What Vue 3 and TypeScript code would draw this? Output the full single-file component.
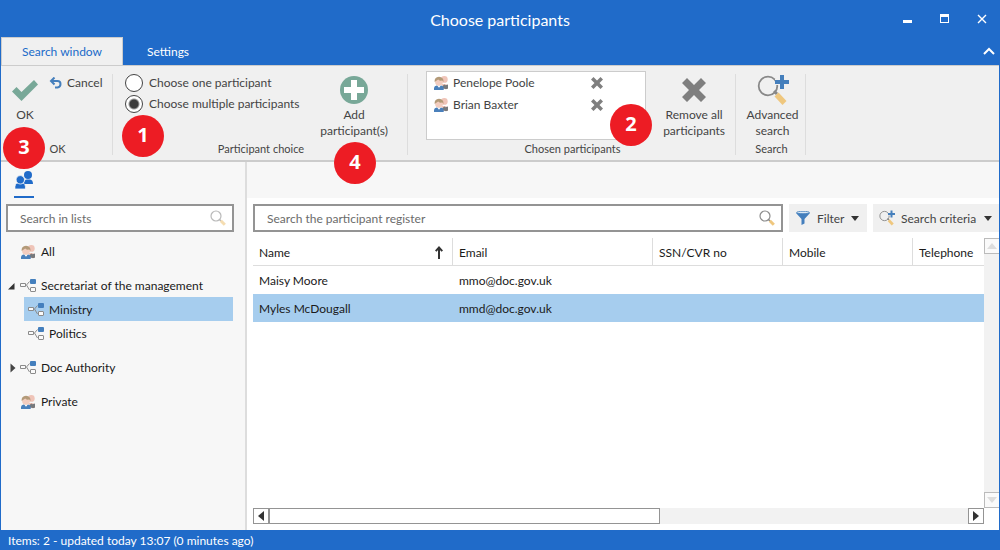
<script setup lang="ts">
import { ref } from 'vue'

interface Person { name: string; email: string }
interface TreeNode { label: string; icon: 'people' | 'org'; level: number; state?: 'open' | 'closed'; gap: boolean }

const mode = ref<'one' | 'multiple'>('multiple')
const listQuery = ref('')
const registerQuery = ref('')
const chosen = ref<string[]>(['Penelope Poole', 'Brian Baxter'])
const selectedNode = ref('Ministry')
const selectedPerson = ref('Myles McDougall')

const tree: TreeNode[] = [
  { label: 'All', icon: 'people', level: 0, gap: false },
  { label: 'Secretariat of the management', icon: 'org', level: 0, state: 'open', gap: true },
  { label: 'Ministry', icon: 'org', level: 1, gap: false },
  { label: 'Politics', icon: 'org', level: 1, gap: false },
  { label: 'Doc Authority', icon: 'org', level: 0, state: 'closed', gap: true },
  { label: 'Private', icon: 'people', level: 0, gap: true },
]

const people: Person[] = [
  { name: 'Maisy Moore', email: 'mmo@doc.gov.uk' },
  { name: 'Myles McDougall', email: 'mmd@doc.gov.uk' },
]

function removeChosen(name: string) {
  chosen.value = chosen.value.filter((n) => n !== name)
}
</script>

<template>
  <div class="window">
    <svg class="defs" aria-hidden="true">
      <symbol id="i-people" viewBox="0 0 14 14">
        <circle cx="10.3" cy="3.4" r="3.4" fill="#efc4b8" />
        <path d="M8 8h3l3 1v4H8z" fill="#efc4b8" />
        <path d="M9 9.500l1.500-1 1 .7 2.500-.7v4l-2 .7-3-1z" fill="#77797c" />
        <path d="M0 14v-2.300q.3-1.700 2.700-2.200h4.500q2.300.5 2.500 2.200V14z" fill="#4a80bb" />
        <path d="M3 9.300l2 2.400 2-2.400z" fill="#fff" />
        <circle cx="5" cy="5.800" r="3.900" fill="#f3cdbf" />
        <path d="M.6 6Q.2 1 5 .8q4.800.2 4.500 5.200L8.300 4.500 6 4.800 4.200 3.600 2 5z" fill="#b39a78" />
      </symbol>
      <symbol id="i-org" viewBox="0 0 16 14">
        <path d="M.5 4.500h5v3h-5z" fill="#fafafa" stroke="#8b8b8b" />
        <path d="M9.500 2.500L6.500 6l3 5" fill="none" stroke="#8b8b8b" />
        <rect x="10" y="0" width="6" height="5" rx="1" fill="#447fbd" />
        <rect x="10.500" y="8.500" width="5" height="4" rx=".5" fill="#fafafa" stroke="#8b8b8b" />
      </symbol>
      <symbol id="i-search" viewBox="0 0 16 16">
        <circle cx="6" cy="6" r="5" fill="none" stroke="#8c8c8c" stroke-width="1.200" />
        <path d="M9.600 9.600l1.400 1.400" stroke="#8c8c8c" stroke-width="1.500" />
        <path d="M10.800 10.800l4 4" stroke="#efc77e" stroke-width="3" />
      </symbol>
      <symbol id="i-search-plus" viewBox="0 0 32 32">
        <circle cx="11" cy="12" r="9.300" fill="none" stroke="#888" stroke-width="1.800" />
        <path d="M17 17l3 3" stroke="#888" stroke-width="3" />
        <path d="M19.500 20.500l8 8.500" stroke="#efc77e" stroke-width="5.500" />
        <path d="M25 1v14M18 8h14" stroke="#f0f0f0" stroke-width="6" />
        <path d="M25 1v14M18 8h14" stroke="#457fbc" stroke-width="4" />
      </symbol>
      <symbol id="i-cross" viewBox="0 0 24 24">
        <path d="M5 0l7 7 7-7 5 5-7 7 7 7-5 5-7-7-7 7-5-5 7-7-7-7z" fill="#7f7f7f" />
      </symbol>
    </svg>

    <header class="titlebar">
      <h1>Choose participants</h1>
      <div class="controls">
        <button type="button" aria-label="Minimize"><svg width="10" height="10" viewBox="0 0 10 10"><path d="M0 6h9v3H0z" fill="#fff" /></svg></button>
        <button type="button" aria-label="Maximize"><svg width="10" height="10" viewBox="0 0 10 10"><path d="M0 0h9v9H0zM1 3v5h7V3z" fill="#fff" fill-rule="evenodd" /></svg></button>
        <button type="button" aria-label="Close"><svg width="10" height="10" viewBox="0 0 10 10"><path d="M1 1l8 8M9 1l-8 8" stroke="#fff" stroke-width="1.400" /></svg></button>
      </div>
    </header>

    <nav class="tabs">
      <button type="button" class="tab active">Search window</button>
      <button type="button" class="tab">Settings</button>
      <button type="button" class="collapse" aria-label="Collapse ribbon"><svg width="12" height="8" viewBox="0 0 12 8"><path d="M1 7l5-5 5 5" fill="none" stroke="#fff" stroke-width="2" /></svg></button>
    </nav>

    <section class="ribbon">
      <div class="group g-ok">
        <div class="body">
          <button type="button" class="big">
            <svg class="big-icon" viewBox="0 0 32 32"><path d="M3 17.500l4.500-4.500 5 5L25 6l4 4.500-16.500 16.500z" fill="#78a898" /></svg>
            <span>OK</span>
          </button>
          <button type="button" class="small">
            <svg width="13" height="12" viewBox="0 0 13 12"><path d="M5.500.5L2 4l3.500 3.500M2 4h6.500Q11.500 4 11.500 7T8.500 10.500H6" fill="none" stroke="#457fbc" stroke-width="2" /></svg>
            <span>Cancel</span>
          </button>
        </div>
        <div class="caption">OK</div>
        <span class="badge b3">3</span>
      </div>

      <div class="group g-choice">
        <div class="body">
          <div class="radios">
            <label><input v-model="mode" type="radio" name="mode" value="one" /><span>Choose one participant</span></label>
            <label><input v-model="mode" type="radio" name="mode" value="multiple" /><span>Choose multiple participants</span></label>
          </div>
          <button type="button" class="big">
            <svg class="big-icon" viewBox="0 0 32 32"><circle cx="16" cy="16" r="14" fill="#78a898" /><path d="M16 6v20M6 16h20" stroke="#fff" stroke-width="6" /></svg>
            <span>Add<br />participant(s)</span>
          </button>
        </div>
        <div class="caption">Participant choice</div>
        <span class="badge b1">1</span>
        <span class="badge b4">4</span>
      </div>

      <div class="group g-chosen">
        <div class="body">
          <ul class="chosen">
            <li v-for="name in chosen" :key="name">
              <svg width="14" height="14"><use href="#i-people" /></svg>
              <span>{{ name }}</span>
              <button type="button" :aria-label="'Remove ' + name" @click="removeChosen(name)"><svg width="12" height="12"><use href="#i-cross" /></svg></button>
            </li>
          </ul>
          <button type="button" class="big" @click="chosen = []">
            <svg class="big-icon" viewBox="0 0 32 32"><use href="#i-cross" x="4" y="4" width="24" height="24" /></svg>
            <span>Remove all<br />participants</span>
          </button>
        </div>
        <div class="caption">Chosen participants</div>
        <span class="badge b2">2</span>
      </div>

      <div class="group g-search">
        <div class="body">
          <button type="button" class="big">
            <svg class="big-icon"><use href="#i-search-plus" /></svg>
            <span>Advanced<br />search</span>
          </button>
        </div>
        <div class="caption">Search</div>
      </div>
    </section>

    <div class="content">
      <aside class="sidebar">
        <button type="button" class="people-tab" aria-label="Participants">
          <svg width="18" height="18" viewBox="0 0 18 18" fill="#206bc9"><circle cx="13" cy="4" r="4" /><path d="M9 13q0-4.500 3-4.500h3q3 .3 3 4.500z" /><g stroke="#f7f7f7" stroke-width=".8"><path d="M-.2 18Q-.3 12 3 12h4.500q3.200 0 3 6z" /><circle cx="5.300" cy="8.800" r="4.200" /></g></svg>
        </button>
        <div class="field">
          <input v-model="listQuery" type="text" placeholder="Search in lists" aria-label="Search in lists" />
          <svg class="faded" width="16" height="16"><use href="#i-search" /></svg>
        </div>
        <ul class="tree">
          <li v-for="node in tree" :key="node.label" :class="{ gap: node.gap, child: node.level === 1, selected: node.label === selectedNode }" @click="selectedNode = node.label">
            <span class="twist">
              <svg v-if="node.state === 'open'" width="7" height="7" viewBox="0 0 7 7"><path d="M6.500 0v6.500H0z" fill="#333" /></svg>
              <svg v-if="node.state === 'closed'" class="closed" width="6" height="10" viewBox="0 0 6 10"><path d="M.5.5v9L5.500 5z" fill="#444" /></svg>
            </span>
            <svg v-if="node.icon === 'people'" class="node-icon" width="16" height="14"><use href="#i-people" /></svg>
            <svg v-else class="node-icon" width="16" height="14"><use href="#i-org" /></svg>
            <span>{{ node.label }}</span>
          </li>
        </ul>
      </aside>

      <main class="main">
        <div class="band"></div>
        <div class="tools">
          <div class="field">
            <input v-model="registerQuery" type="text" placeholder="Search the participant register" aria-label="Search the participant register" />
            <svg width="16" height="16"><use href="#i-search" /></svg>
          </div>
          <button type="button" class="tool">
            <svg width="14" height="14" viewBox="0 0 14 14"><path d="M0 2l5.500 6v6l3-1.500V8L14 2z" fill="#447fbd" /><ellipse cx="7" cy="1.500" rx="6.500" ry="1.200" fill="#dbe9f5" stroke="#447fbd" stroke-width=".8" /></svg>
            <span>Filter</span>
            <svg width="8" height="5" viewBox="0 0 8 5"><path d="M0 0h8L4 5z" fill="#333" /></svg>
          </button>
          <button type="button" class="tool criteria">
            <svg width="16" height="16"><use href="#i-search-plus" /></svg>
            <span>Search criteria</span>
            <svg width="8" height="5" viewBox="0 0 8 5"><path d="M0 0h8L4 5z" fill="#333" /></svg>
          </button>
        </div>

        <div class="grid">
          <div class="table-area">
            <table>
              <colgroup><col class="c-wide" /><col class="c-wide" /><col class="c-mid" /><col class="c-mid" /><col /></colgroup>
              <thead>
                <tr>
                  <th><div class="sorted"><span>Name</span><svg width="8" height="13" viewBox="0 0 8 13"><path d="M4 13V2M.7 5.200L4 1.500l3.300 3.700" fill="none" stroke="#333" stroke-width="2" /></svg></div></th>
                  <th>Email</th>
                  <th>SSN/CVR no</th>
                  <th>Mobile</th>
                  <th>Telephone</th>
                </tr>
              </thead>
              <tbody>
                <tr v-for="p in people" :key="p.name" :class="{ selected: p.name === selectedPerson }" @click="selectedPerson = p.name">
                  <td>{{ p.name }}</td>
                  <td>{{ p.email }}</td>
                  <td></td>
                  <td></td>
                  <td></td>
                </tr>
              </tbody>
            </table>
          </div>
          <div class="vscroll">
            <button type="button" aria-label="Scroll up" disabled><svg width="10" height="6" viewBox="0 0 10 6"><path d="M0 6h10L5 0z" fill="#ddd" /></svg></button>
            <button type="button" aria-label="Scroll down" disabled><svg width="10" height="6" viewBox="0 0 10 6"><path d="M0 0h10L5 6z" fill="#ddd" /></svg></button>
          </div>
          <div class="hscroll">
            <button type="button" aria-label="Scroll left"><svg width="6" height="10" viewBox="0 0 6 10"><path d="M6 0v10L0 5z" fill="#333" /></svg></button>
            <div class="track"><div class="thumb"></div></div>
            <button type="button" aria-label="Scroll right"><svg width="6" height="10" viewBox="0 0 6 10"><path d="M0 0v10l6-5z" fill="#333" /></svg></button>
          </div>
        </div>
      </main>
    </div>

    <footer class="status">Items: 2 - updated today 13:07 (0 minutes ago)</footer>
  </div>
</template>

<style>
body { margin: 0; }
</style>

<style scoped>
.window {
  --blue: #206bc9;
  box-sizing: border-box;
  display: flex;
  flex-direction: column;
  min-height: 100vh;
  border: solid var(--blue);
  border-width: 0 1px;
  background: #fff;
  color: #1a1a1a;
  font: 12px/16px Lato, "Open Sans", sans-serif;
}
.window *, .window *::before { box-sizing: border-box; }
.defs { position: absolute; width: 0; height: 0; }
svg { display: block; flex: none; }
button { margin: 0; padding: 0; border: 0; background: none; color: inherit; font: inherit; }
ul { margin: 0; padding: 0; list-style: none; }

.titlebar { display: grid; grid-template-columns: 1fr auto 1fr; align-items: center; height: 37px; background: var(--blue); color: #fff; }
.titlebar h1 { grid-column: 2; margin: 0; padding-top: 2px; font-size: 16px; font-weight: 400; line-height: 24px; }
.controls { display: flex; justify-content: flex-end; gap: 27px; padding-right: 12px; }
.controls button { width: 10px; height: 10px; }

.tabs { display: flex; height: 29px; background: var(--blue); color: #fff; border-bottom: 1px solid #ccc; }
.tab { padding: 2px 24px 0; }
.tab.active { width: 122px; padding: 0; background: #f0f0f0; color: var(--blue); border: 1px solid #ccc; border-bottom: 0; }
.collapse { margin-left: auto; width: 20px; display: grid; place-items: center; }

.ribbon { display: flex; height: 96px; background: #f0f0f0; color: #444; border-bottom: 2px solid #ccc; }
.group { position: relative; display: flex; flex-direction: column; margin: 8px 0 5px; border-right: 1px solid #ddd; }
.g-ok { width: 112px; }
.g-choice { width: 295px; }
.g-chosen { width: 328px; }
.g-search { width: 70px; }
.body { display: flex; align-items: flex-start; flex: none; height: 68px; }
.caption { padding-left: 2px; font-size: 11px; line-height: 14px; text-align: center; }
.big { display: flex; flex-direction: column; align-items: center; gap: 1px; white-space: nowrap; }
.big-icon { width: 32px; height: 32px; }
.g-ok .big { width: 32px; margin-left: 8px; }
.small { display: flex; align-items: center; gap: 5px; margin: 1px 0 0 8px; }
.g-choice .body { justify-content: space-between; padding: 0 19px 0 12px; }
.radios label { display: flex; align-items: center; gap: 6px; height: 21px; white-space: nowrap; }
.radios label:first-child { margin-top: -2px; }
.radios input { appearance: none; flex: none; width: 18px; height: 18px; margin: 0; border: 1px solid #444; border-radius: 50%; background: #fff; }
.radios input:checked { background: radial-gradient(circle, #3c3c3c 4px, #fff 6px); }
.g-chosen .body { padding: 0 10px 0 18px; justify-content: space-between; }
.chosen { width: 220px; height: 69px; margin-top: -3px; background: #fff; border: 1px solid #ccc; }
.chosen li { display: flex; align-items: center; gap: 5px; height: 22px; padding: 0 42px 0 7px; }
.chosen button { margin-left: auto; }
.g-search .body { justify-content: center; }
.g-search .big { padding-left: 4px; }

.badge { position: absolute; width: 42px; height: 42px; border-radius: 50%; background: #ed1c24; color: #fff; font: 700 20px/40px "Open Sans", sans-serif; text-align: center; z-index: 1; }
.b3 { left: 2px; top: 53px; }
.b1 { left: 9px; top: 41px; }
.b4 { left: 221px; top: 68px; }
.b2 { left: 202px; top: 30px; }

.content { display: flex; flex: 1; }
.sidebar { flex: none; width: 246px; padding: 8px 12px 0 5px; background: #f7f7f7; border-right: 2px solid #ddd; }
.people-tab { display: block; width: 20px; height: 28px; margin-left: 8px; padding: 0 1px 7px; border-bottom: 2px solid var(--blue); }
.field { display: flex; align-items: center; height: 28px; padding: 0 6px 0 12px; border: 2px solid #949494; background: #fff; }
.field input { flex: 1; min-width: 0; padding: 2px 0 0; border: 0; outline: 0; background: none; font: inherit; color: #1a1a1a; }
.field input::placeholder { color: #6b6b6b; opacity: 1; }
.sidebar .field { width: 228px; margin-top: 6px; }
.faded { opacity: .6; }
.tree { margin-top: 7px; }
.tree li { display: flex; align-items: center; height: 24px; padding-top: 2px; white-space: nowrap; }
.tree li.gap { margin-top: 10px; }
.tree li.child { margin-left: 18px; padding-left: 4px; width: 209px; }
.tree li.selected { background: #a6cdee; }
.twist { width: 14px; padding-left: 2px; }
.closed { margin-left: 2px; }
.child .twist { display: none; }
.node-icon { margin-right: 5px; }

.main { flex: 1; min-width: 0; display: flex; flex-direction: column; }
.band { height: 36px; background: #f7f7f7; }
.tools { display: flex; gap: 6px; padding: 6px 0 6px 6px; }
.tools .field { flex: 1; }
.tool { display: flex; align-items: center; gap: 7px; width: 78px; padding: 0 8px 0 7px; background: #f0f0f0; color: #444; white-space: nowrap; }
.tool span { padding-top: 2px; }
.tool svg:last-child { margin-left: auto; }
.criteria { width: 126px; gap: 6px; padding: 0 7px 0 6px; }
.grid { flex: 1; display: grid; grid-template-columns: 1fr 15px; grid-template-rows: 1fr 16px; padding: 0 0 6px 6px; }
.table-area { overflow: hidden; }
table { width: 100%; table-layout: fixed; border-collapse: separate; border-spacing: 0; }
.c-wide { width: 200px; }
.c-mid { width: 130px; }
th, td { height: 28px; padding: 2px 6px 0; text-align: left; font-weight: 400; white-space: nowrap; }
th { border-right: 1px solid #ddd; border-bottom: 1px solid #ddd; }
th:last-child { border-right: 0; }
.sorted { display: flex; align-items: center; justify-content: space-between; padding-right: 3px; }
tr.selected td { background: #a6cdee; }
.vscroll { display: flex; flex-direction: column; justify-content: space-between; background: #f2f2f2; }
.vscroll button { display: grid; place-items: center; height: 16px; border: 1px solid #bbb; border-right: 0; background: #fafafa; }
.hscroll { display: flex; background: #f2f2f2; }
.hscroll button { display: grid; place-items: center; width: 16px; border: 1px solid #949494; background: #fff; }
.track { flex: 1; }
.thumb { width: 56%; height: 16px; border: 1px solid #949494; background: #fff; }

.status { flex: none; height: 20px; padding: 0 7px; background: var(--blue); color: #fff; line-height: 22px; }
</style>
